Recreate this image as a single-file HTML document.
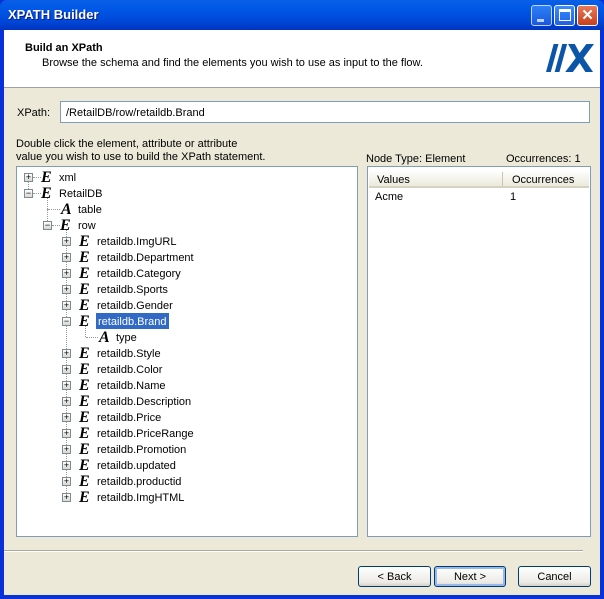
<!DOCTYPE html><html><head><style>
*{margin:0;padding:0;box-sizing:border-box}
body{width:604px;height:599px;overflow:hidden;font-family:"Liberation Sans",Arial,sans-serif;font-size:11px;color:#000;position:relative;background:#0831d9}
.abs{position:absolute}
.t{padding-top:1px}
.title{left:0;top:0;width:604px;height:30px;background:linear-gradient(#0a5fe6,#0058e6 30%,#0048d8 70%,#0035c0);border-radius:7px 7px 0 0}
.title span{position:absolute;left:8px;top:7px;color:#fff;font-weight:bold;font-size:13px;text-shadow:1px 1px #0a1a80}
.tb{position:absolute;top:5px;width:21px;height:21px;border:1px solid #fff;border-radius:3px;background:linear-gradient(#3c8cf8,#2160e8)}
.client{left:4px;top:30px;width:596px;height:565px;background:#ece9d8}
.hdr{left:4px;top:30px;width:596px;height:58px;background:#fff;border-bottom:1px solid #a0a0a0}
.box{background:#fff;border:1px solid #7f9db9}
.row{position:absolute;height:16px;line-height:18px;white-space:nowrap}
.pm{position:absolute;width:9px;height:9px;border:1px solid #7a8a99;background:linear-gradient(#fff,#d8d8cc);font-size:9px;line-height:7px;text-align:center;font-family:"Liberation Sans";}
.ic{position:absolute;font-family:"Liberation Serif",serif;font-style:italic;font-weight:bold;font-size:16px;line-height:17px}
.dv{position:absolute;border-left:1px dotted #999}
.dh{position:absolute;border-top:1px dotted #999;width:8px}
.btn{position:absolute;top:566px;height:21px;border:1px solid #003c74;border-radius:3px;background:linear-gradient(#fff,#ecebe6 80%,#d6d0c5);text-align:center;line-height:20px}
</style></head><body>
<div class="abs title"><span>XPATH Builder</span>
<div class="tb" style="left:531px;opacity:.75"><div style="position:absolute;left:5px;top:13px;width:7px;height:3px;background:#fff"></div></div>
<div class="tb" style="left:554px"><div style="position:absolute;left:4px;top:3px;width:12px;height:12px;border:1px solid #fff;border-top-width:3px"></div></div>
<div class="tb" style="left:577px;background:linear-gradient(#e8785a,#c8401c);color:#fff;font-weight:bold;font-size:15px;text-align:center;line-height:19px">✕</div>
</div>
<div class="abs client"></div>
<div class="abs hdr"></div>
<div class="abs t" style="left:25px;top:41px;font-weight:bold">Build an XPath</div>
<div class="abs t" style="left:42px;top:56px">Browse the schema and find the elements you wish to use as input to the flow.</div>
<svg class="abs" style="left:546px;top:44px" width="48" height="28" viewBox="0 0 50 28" preserveAspectRatio="none">
<polygon points="8,0 13,0 5,28 0,28" fill="#0b55a8"/>
<polygon points="17,0 22,0 14,28 9,28" fill="#0b55a8"/>
<polygon points="23,0 30,0 35,9 42,0 50,0 39,14 49,28 41,28 35,19 28,28 20,28 31,14" fill="#0b55a8"/>
</svg>
<div class="abs t" style="left:17px;top:106px">XPath:</div>
<div class="abs box" style="left:60px;top:101px;width:530px;height:22px;padding:5px 0 0 5px">/RetailDB/row/retaildb.Brand</div>
<div class="abs t" style="left:16px;top:137px;line-height:13px">Double click the element, attribute or attribute<br>value you wish to use to build the XPath statement.</div>
<div class="abs t" style="left:366px;top:152px">Node Type: Element</div>
<div class="abs t" style="left:506px;top:152px">Occurrences: 1</div>
<div class="abs box" style="left:16px;top:166px;width:342px;height:371px;overflow:hidden"></div>
<div class="abs box" style="left:367px;top:166px;width:224px;height:371px"></div>
<div class="abs" style="left:369px;top:170px;width:220px;height:18px;background:linear-gradient(#fff,#ebeadb);border-bottom:2px solid #d6d2c2"></div>
<div class="abs" style="left:502px;top:172px;height:14px;border-left:1px solid #c7c5b2"></div>
<div class="abs t" style="left:377px;top:173px">Values</div>
<div class="abs t" style="left:512px;top:173px">Occurrences</div>
<div class="abs t" style="left:375px;top:190px">Acme</div>
<div class="abs t" style="left:510px;top:190px">1</div>
<div class="abs" style="left:4px;top:550px;width:579px;border-top:1px solid #aca899;border-bottom:1px solid #fff"></div>
<div class="btn" style="left:358px;width:73px">&lt; Back</div>
<div class="btn" style="left:434px;width:72px;box-shadow:inset 0 0 0 2px #98b8ea">Next &gt;</div>
<div class="btn" style="left:518px;width:73px">Cancel</div>

<div class="dv" style="left:28px;top:180px;height:13px"></div>
<div class="dv" style="left:47px;top:197px;height:12px"></div>
<div class="dv" style="left:47px;top:209px;height:16px"></div>
<div class="dv" style="left:66px;top:229px;height:268px"></div>
<div class="dv" style="left:85px;top:325px;height:12px"></div>

<div class="dh" style="left:33px;top:177px"></div><div class="pm" style="left:24px;top:173px">+</div><div class="ic" style="left:41px;top:169px">E</div><div class="row" style="left:59px;top:169px">xml</div>
<div class="dh" style="left:33px;top:193px"></div><div class="pm" style="left:24px;top:189px">−</div><div class="ic" style="left:41px;top:185px">E</div><div class="row" style="left:59px;top:185px">RetailDB</div>
<div class="dh" style="left:48px;top:209px;width:12px"></div><div class="ic" style="left:61px;top:201px">A</div><div class="row" style="left:78px;top:201px">table</div>
<div class="dh" style="left:52px;top:225px"></div><div class="pm" style="left:43px;top:221px">−</div><div class="ic" style="left:60px;top:217px">E</div><div class="row" style="left:78px;top:217px">row</div>

<div class="pm" style="left:62px;top:237px">+</div><div class="ic" style="left:79px;top:233px">E</div><div class="row" style="left:97px;top:233px">retaildb.ImgURL</div>
<div class="pm" style="left:62px;top:253px">+</div><div class="ic" style="left:79px;top:249px">E</div><div class="row" style="left:97px;top:249px">retaildb.Department</div>
<div class="pm" style="left:62px;top:269px">+</div><div class="ic" style="left:79px;top:265px">E</div><div class="row" style="left:97px;top:265px">retaildb.Category</div>
<div class="pm" style="left:62px;top:285px">+</div><div class="ic" style="left:79px;top:281px">E</div><div class="row" style="left:97px;top:281px">retaildb.Sports</div>
<div class="pm" style="left:62px;top:301px">+</div><div class="ic" style="left:79px;top:297px">E</div><div class="row" style="left:97px;top:297px">retaildb.Gender</div>
<div class="pm" style="left:62px;top:317px">−</div><div class="ic" style="left:79px;top:313px">E</div><div class="row" style="left:96px;top:313px;background:#316ac5;color:#fff;padding:0 2px">retaildb.Brand</div>
<div class="dh" style="left:86px;top:337px;width:12px"></div><div class="ic" style="left:99px;top:329px">A</div><div class="row" style="left:116px;top:329px">type</div>
<div class="pm" style="left:62px;top:349px">+</div><div class="ic" style="left:79px;top:345px">E</div><div class="row" style="left:97px;top:345px">retaildb.Style</div>
<div class="pm" style="left:62px;top:365px">+</div><div class="ic" style="left:79px;top:361px">E</div><div class="row" style="left:97px;top:361px">retaildb.Color</div>
<div class="pm" style="left:62px;top:381px">+</div><div class="ic" style="left:79px;top:377px">E</div><div class="row" style="left:97px;top:377px">retaildb.Name</div>
<div class="pm" style="left:62px;top:397px">+</div><div class="ic" style="left:79px;top:393px">E</div><div class="row" style="left:97px;top:393px">retaildb.Description</div>
<div class="pm" style="left:62px;top:413px">+</div><div class="ic" style="left:79px;top:409px">E</div><div class="row" style="left:97px;top:409px">retaildb.Price</div>
<div class="pm" style="left:62px;top:429px">+</div><div class="ic" style="left:79px;top:425px">E</div><div class="row" style="left:97px;top:425px">retaildb.PriceRange</div>
<div class="pm" style="left:62px;top:445px">+</div><div class="ic" style="left:79px;top:441px">E</div><div class="row" style="left:97px;top:441px">retaildb.Promotion</div>
<div class="pm" style="left:62px;top:461px">+</div><div class="ic" style="left:79px;top:457px">E</div><div class="row" style="left:97px;top:457px">retaildb.updated</div>
<div class="pm" style="left:62px;top:477px">+</div><div class="ic" style="left:79px;top:473px">E</div><div class="row" style="left:97px;top:473px">retaildb.productid</div>
<div class="pm" style="left:62px;top:493px">+</div><div class="ic" style="left:79px;top:489px">E</div><div class="row" style="left:97px;top:489px">retaildb.ImgHTML</div>
</body></html>
